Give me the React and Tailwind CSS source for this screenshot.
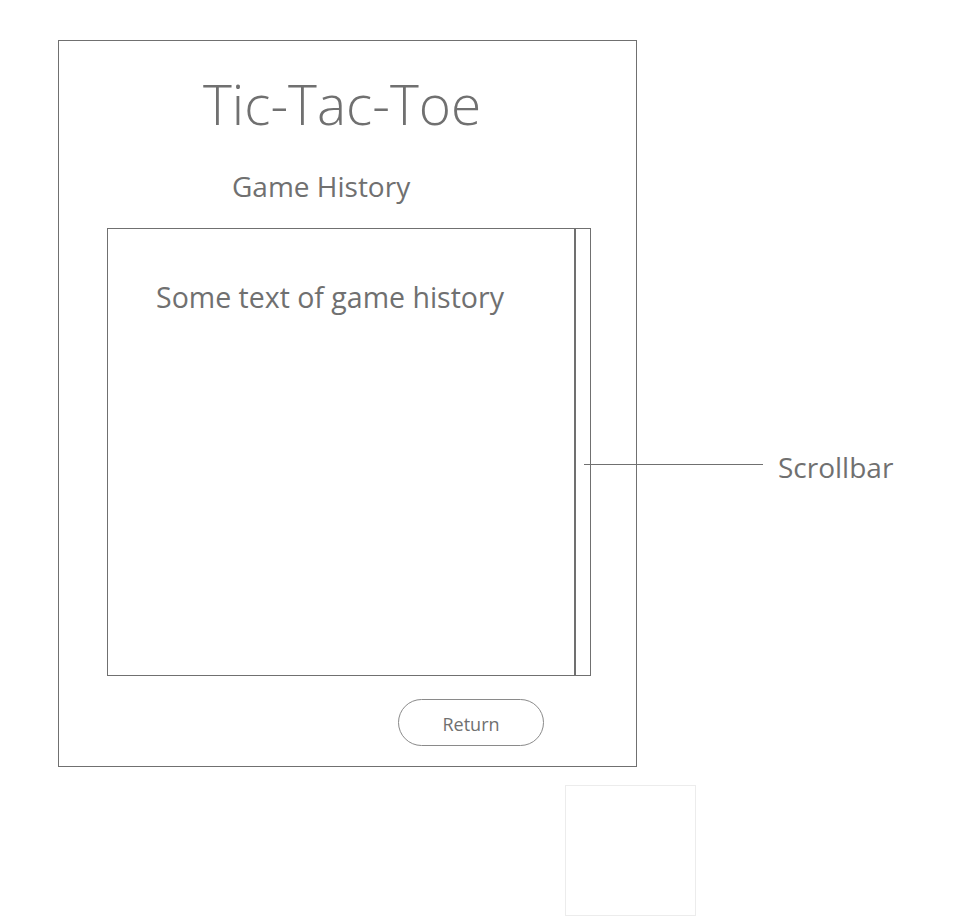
export default function App() {
  const font = { fontFamily: '"Open Sans", "Noto Sans", sans-serif' };
  return (
    <div className="relative w-[964px] h-[916px] bg-white text-[#707070]" style={font}>
      <div className="pt-[40px] pl-[58px]">
        <div className="w-[579px] h-[727px] border border-[#707070] flex flex-col">
          <div className="pt-[23px] pl-[144px] text-[55px] leading-[80px] font-light">Tic-Tac-Toe</div>
          <div className="mt-[24px] pl-[173px] text-[28px] leading-[36px]">Game History</div>
          <div className="mt-[24px] ml-[48px] w-[484px] h-[448px] border border-[#707070] flex">
            <div className="flex-1 pt-[48px] pl-[48px] text-[28.5px] leading-[40px]">Some text of game history</div>
            <div className="w-[16px] h-full border-l-2 border-[#707070]" />
          </div>
          <div className="mt-[23px] ml-[339px] w-[146px] h-[47px] pt-[3px] rounded-full border border-[#8a8a8a] flex items-center justify-center text-[18px]">
            Return
          </div>
        </div>
      </div>
      <div className="absolute left-[584px] top-[464px] w-[179px] h-px bg-[#707070]" />
      <div className="absolute left-[778px] top-[447px] text-[28px] leading-[40px]">Scrollbar</div>
      <div className="absolute left-[565px] top-[785px] w-[131px] h-[131px] border border-[#ececec]" />
    </div>
  );
}
